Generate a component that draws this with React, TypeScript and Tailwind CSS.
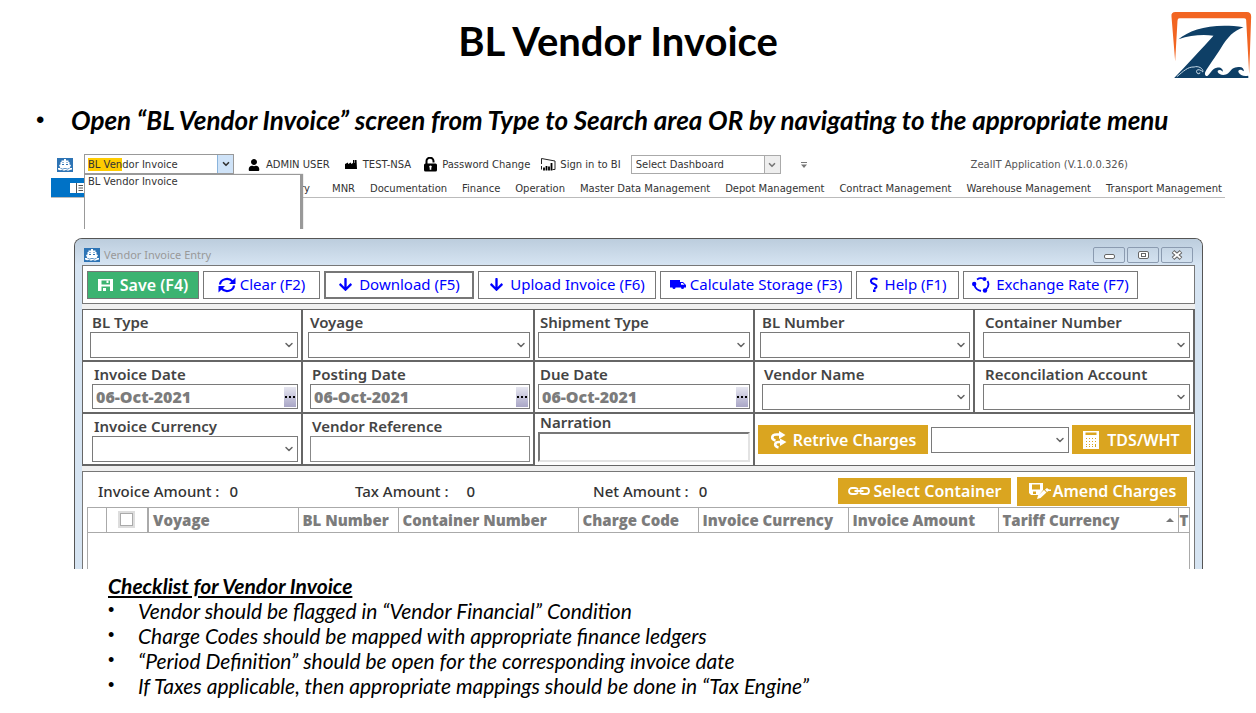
import { useState } from "react"
import type { ReactNode } from "react"
import clsx from "clsx"
import { ChevronDown } from "lucide-react"
import { FaArrowDown, FaUser } from "react-icons/fa"

const menus = [
  "MNR",
  "Documentation",
  "Finance",
  "Operation",
  "Master Data Management",
  "Depot Management",
  "Contract Management",
  "Warehouse Management",
  "Transport Management",
]

const checklist = [
  "Vendor should be flagged in “Vendor Financial” Condition",
  "Charge Codes should be mapped with appropriate finance ledgers",
  "“Period Definition” should be open for the corresponding invoice date",
  "If Taxes applicable, then appropriate mappings should be done in “Tax Engine”",
]

const columns = [
  { label: "Voyage", width: "w-[150px]" },
  { label: "BL Number", width: "w-[100px]" },
  { label: "Container Number", width: "w-[180px]" },
  { label: "Charge Code", width: "w-[120px]" },
  { label: "Invoice Currency", width: "w-[150px]" },
  { label: "Invoice Amount", width: "w-[150px]" },
  { label: "Tariff Currency", width: "w-[180px]", sorted: true },
  { label: "T", width: "w-auto" },
]

function Logo() {
  return (
    <svg viewBox="60 33 245 204" className="h-[68px] w-[82px]" role="img" aria-label="Company logo">
      <path
        d="M75 184 L64 50 Q62 36 76 36 H290 Q303 36 303 50 L297 222 L288 60 Q288 55 282 55 H88 Q82 55 82 62 Z"
        fill="#f26522"
      />
      <path
        d="M85 118 C120 88 190 68 280 82 C250 92 232 112 212 145 C194 174 176 196 165 217 C162 228 168 230 180 228 H294 V234 H72 C110 195 155 145 190 107 C155 103 120 106 85 118 Z"
        fill="#0e3f66"
      />
      <path
        d="M80 230 C100 214 112 200 132 201 C143 197 160 204 158 216 C151 207 138 207 139 215 C140 223 151 223 149 217"
        fill="none"
        stroke="#c9dbe8"
        strokeWidth="3"
      />
      <path
        d="M166 232 C180 224 184 206 200 203 C210 200 219 206 218 215 C211 207 200 209 203 217 C206 225 224 228 234 220 C243 212 246 203 260 202 C274 198 282 205 281 214 C273 206 262 208 265 217 C269 226 282 230 294 227 V234 Z"
        fill="#0e3f66"
      />
    </svg>
  )
}

function ShipIcon() {
  return (
    <svg viewBox="0 0 16 14" className="h-3.5 w-4 shrink-0" aria-hidden="true">
      <rect width="16" height="14" fill="#2e74b5" />
      <path
        d="M7 1h2v1.500h2.500V4h1v2.500L14 7l-1.300 3H15v1.500l-2 .5-2 .8-2-.8-2 .8-2-.8-2 .3-2-.8V10h2.300L2 7l1.500-.5V4h1V2.500H7Z"
        fill="#fff"
      />
      <path
        d="M5.500 4h1v1h-1zM9.500 4h1v1h-1zM5 6h2v1H5zM9 6h2v1H9zM3.500 10l2 .8L8 10l2.500.8 2-.8v.8l-2 .8L8 10.800l-2.500.8-2-.8Z"
        fill="#2e74b5"
      />
    </svg>
  )
}

function FactoryIcon() {
  return (
    <svg viewBox="0 0 12 9" className="h-[9px] w-3" aria-hidden="true">
      <path d="M0 9V4l3-1.500V4l3-1.500V4l2-1V0h1.500v3H10V0h1.500L12 9Z" fill="#000" />
    </svg>
  )
}

function UnlockIcon() {
  return (
    <svg viewBox="0 0 15 15" className="size-[15px]" aria-hidden="true">
      <path d="M3.500 7V4.500a3.500 3.500 0 0 1 7-.5v1.500" fill="none" stroke="#000" strokeWidth="2" />
      <rect x="1" y="6.500" width="13" height="8" rx="1.500" fill="#000" />
      <path d="M7.500 8.500a1.300 1.300 0 0 1 .8 2.300v2H6.700v-2a1.300 1.300 0 0 1 .8-2.300" fill="#fff" />
    </svg>
  )
}

function BiIcon() {
  return (
    <svg viewBox="0 0 16 15" className="h-[15px] w-4" fill="none" aria-hidden="true">
      <path d="M1.500 7V1.500L15 4v8.500h-2.500M1.500 9v3.500" stroke="#222" />
      <path d="M4 10.500v3M6.500 9v4.500M9 9.500v4M11.500 6v7.500" stroke="#000" strokeWidth="1.800" />
    </svg>
  )
}

function SaveIcon() {
  return (
    <svg viewBox="0 0 15 13" className="h-[13px] w-[15px]" aria-hidden="true">
      <path d="M0 1h15v12h-3V8.500H3.500V13H0ZM3.500 2.500v4H12v-4Z" fill="#fff" fillRule="evenodd" />
      <path d="M8.500 2.500h2V5h-2ZM5 10h3v3H5Z" fill="#fff" />
    </svg>
  )
}

function RefreshIcon() {
  return (
    <svg viewBox="0 0 18 16" className="h-4 w-[18px]" aria-hidden="true">
      <path
        d="M2 7.500C2.500 2 10.500 0 14.500 4.500M16 8.500C15.500 14 7.500 16 3.500 11.500"
        fill="none"
        stroke="#00f"
        strokeWidth="2.200"
      />
      <path d="M17.500 0.500V7H11ZM.5 15.500V9H7Z" fill="#00f" />
    </svg>
  )
}

function TruckIcon() {
  return (
    <svg viewBox="0 0 16 9" className="h-[9px] w-4" aria-hidden="true">
      <path d="M0 0h10v2h3l3 3v2.500H0Z" fill="#00f" />
      <path d="M11 3h1.800l1.700 1.700H11Z" fill="#fff" />
      <circle cx="4" cy="7.500" r="1.500" fill="#00f" />
      <circle cx="12.500" cy="7.500" r="1.500" fill="#00f" />
    </svg>
  )
}

function HelpIcon() {
  return (
    <svg viewBox="0 0 10 15" className="h-[15px] w-2.5" aria-hidden="true">
      <path
        d="M8.500 2.500C5 .5 1.500 2 2 4.500c.5 3 5 2 5.500 4.500.2 1.500-1 2.500-2.500 2.500"
        fill="none"
        stroke="#00f"
        strokeWidth="2"
      />
      <rect x="4" y="12.500" width="2.500" height="2.500" fill="#00f" />
    </svg>
  )
}

function ExchangeIcon() {
  return (
    <svg viewBox="0 0 18 16" className="h-4 w-[18px]" aria-hidden="true">
      <path
        d="M5 2.500Q8 .5 11 1.500M15.500 4Q18 8.500 14 12.500M9 14Q4 13 2.500 8.500"
        fill="none"
        stroke="#00f"
        strokeWidth="1.800"
      />
      <circle cx="12.500" cy="2" r="2" fill="#00f" />
      <circle cx="2.200" cy="7" r="2.200" fill="#00f" />
      <circle cx="13" cy="13.500" r="2.200" fill="#00f" />
    </svg>
  )
}

function RetrieveIcon() {
  return (
    <svg viewBox="0 0 17 18" className="h-[18px] w-[17px]" aria-hidden="true">
      <path
        d="M11 3.500H6.500C1 3.500 1 8.500 5.500 9.500M12 11H9C4 11 4 15.500 8.500 16.500"
        fill="none"
        stroke="#fff"
        strokeWidth="2.600"
      />
      <path d="M9 0 15.500 4 9 8ZM10 7.500l6.500 3.500-6.500 4Z" fill="#fff" />
    </svg>
  )
}

function CalculatorIcon() {
  return (
    <svg viewBox="0 0 16 18" className="h-[18px] w-4" aria-hidden="true">
      <path d="M0 0h16v18H0Z" fill="#fff" />
      <path
        d="M2.500 1.500h11V4h-11ZM3 7h1v1H3zM6 7h1v1H6zM9 7h1v1H9zM12 7h1v1h-1zM3 10h1v1H3zM6 10h1v1H6zM9 10h1v1H9zM12 10h1v1h-1zM3 13h1v1H3zM6 13h1v1H6zM9 13h1v1H9zM12 13h1v3h-1zM3 15h1v1H3zM6 15h1v1H6zM9 15h1v1H9z"
        fill="#daa520"
      />
    </svg>
  )
}

function LinkIcon() {
  return (
    <svg viewBox="0 0 22 8" className="h-2 w-[22px]" fill="none" stroke="#fff" strokeWidth="1.800" aria-hidden="true">
      <path d="M10 2.500Q9 1 7 1H4a3 3 0 0 0 0 6h3q2 0 3-1.500M12 2.500Q13 1 15 1h3a3 3 0 0 1 0 6h-3q-2 0-3-1.500M6.500 4h9" />
    </svg>
  )
}

function AmendIcon() {
  return (
    <svg viewBox="0 0 23 16" className="h-4 w-[23px]" aria-hidden="true">
      <path d="M1 0h14v7l-4 5H3l-2-2ZM4 1.500v5h8v-5ZM5 8.500v2.500h3V8.500Z" fill="#fff" fillRule="evenodd" />
      <path d="M9 16 10 12.500l6-5.500 2.500 2.500-6 5.500ZM17 6.500 19 5l2 1.500h2v1.500h-2.500L19 9Z" fill="#fff" />
    </svg>
  )
}

function ToolButton({ icon, children, className }: { icon: ReactNode; children: ReactNode; className: string }) {
  return (
    <button
      type="button"
      className={clsx("flex h-7 items-center justify-center whitespace-nowrap border", className)}
    >
      {icon}
      {children}
    </button>
  )
}

function GoldButton({ icon, children, className }: { icon: ReactNode; children: ReactNode; className: string }) {
  return (
    <button
      type="button"
      className={clsx(
        "flex shrink-0 items-center justify-center whitespace-nowrap bg-[#daa520] text-[16px] font-semibold text-white",
        className
      )}
    >
      {icon}
      {children}
    </button>
  )
}

function SelectBox({ id, label }: { id: string; label?: string }) {
  return (
    <div className="grid h-[26px] w-full items-center border border-[#7a7a7a] bg-white">
      <select id={id} aria-label={label} className="col-start-1 row-start-1 h-full w-full appearance-none px-1 text-sm" />
      <ChevronDown
        size={12}
        strokeWidth={3}
        className="pointer-events-none col-start-1 row-start-1 mr-0.5 justify-self-end text-[#666]"
      />
    </div>
  )
}

function DateBox({ id }: { id: string }) {
  const [date, setDate] = useState("06-Oct-2021")
  return (
    <div className="flex h-[25px] items-center border border-[#7a7a7a]">
      <input
        id={id}
        value={date}
        onChange={(e) => setDate(e.target.value)}
        className="h-full w-0 flex-1 px-[3px] font-['Open_Sans',sans-serif] text-[16px] font-extrabold text-[#7c7c7c]"
      />
      <button
        type="button"
        aria-label="Pick date"
        className="mr-px flex h-5 w-3 items-center justify-between bg-gradient-to-b from-[#e6e6f0] to-[#a9a6c6] px-px"
      >
        <span className="size-0.5 bg-black" />
        <span className="size-0.5 bg-black" />
        <span className="size-0.5 bg-black" />
      </button>
    </div>
  )
}

function Field({
  id,
  label,
  className,
  children,
}: {
  id: string
  label: string
  className?: string
  children: ReactNode
}) {
  return (
    <div className={clsx("border-r-2 border-b-2 border-[#666] pr-[3px] pt-1", className)}>
      <label htmlFor={id} className="block h-[18px] pl-0.5 text-[15px] leading-[17px] font-semibold text-[#444]">
        {label}
      </label>
      {children}
    </div>
  )
}

function AppStrip() {
  const [query, setQuery] = useState("BL Vendor Invoice")
  return (
    <div className="ml-[51px] mr-[31px] h-[76px] overflow-hidden font-['DejaVu_Sans',sans-serif] text-[10px] text-[#333]">
      <div className="flex h-[23px] items-center">
        <div className="ml-1.5 mr-[11px]">
          <ShipIcon />
        </div>
        <div className="relative mt-px mr-3.5 flex h-5 w-[150px] shrink-0 self-start border border-[#999]">
          <input
            aria-label="Type to search"
            value={query}
            onChange={(e) => setQuery(e.target.value)}
            className="w-0 flex-1 bg-[linear-gradient(#ffcc00,#ffcc00)] bg-[length:34px_13px] bg-[position:3px_3px] bg-no-repeat pl-[3px]"
          />
          <button
            type="button"
            aria-label="Show results"
            className="flex w-4 items-center justify-center border-l border-[#8ab4dc] bg-[#cfe3f8]"
          >
            <ChevronDown size={10} strokeWidth={4} />
          </button>
          <ul className="absolute -left-px top-[19px] z-10 h-20 w-[217px] border-x border-t border-[#999] bg-white pl-[3px] shadow-[2px_0_1px_#999]">
            <li className="leading-[14px]">BL Vendor Invoice</li>
          </ul>
        </div>
        <button type="button" className="mr-[15px] flex items-center gap-1.5 whitespace-nowrap">
          <FaUser size={12} color="#000" />
          ADMIN USER
        </button>
        <button type="button" className="mr-3 flex items-center gap-1.5 whitespace-nowrap">
          <FactoryIcon />
          TEST-NSA
        </button>
        <button type="button" className="mr-2.5 flex items-center gap-1 whitespace-nowrap">
          <UnlockIcon />
          Password Change
        </button>
        <button type="button" className="mr-2.5 flex items-center gap-1 whitespace-nowrap">
          <BiIcon />
          Sign in to BI
        </button>
        <div className="grid h-[19px] w-[150px] shrink-0 border border-[#aaa]">
          <select aria-label="Dashboard" className="col-start-1 row-start-1 appearance-none pl-1">
            <option>Select Dashboard</option>
          </select>
          <span className="pointer-events-none col-start-1 row-start-1 flex w-4 items-center justify-center justify-self-end border-l border-[#aaa] bg-[#eee]">
            <ChevronDown size={10} strokeWidth={4} className="text-[#777]" />
          </span>
        </div>
        <svg viewBox="0 0 6 6" className="ml-5 size-1.5" aria-hidden="true">
          <path d="M0 0h6v1H0zM0 2.500h6L3 6Z" fill="#777" />
        </svg>
        <span className="ml-auto mr-[97px] whitespace-nowrap text-[#555]">ZealIT Application (V.1.0.0.326)</span>
      </div>
      <nav className="mt-0.5 flex h-5 items-center border-b border-[#bbb]">
        <div className="flex h-full w-[33px] shrink-0 items-center justify-end bg-[#0072c6]">
          <svg viewBox="0 0 14 10" className="h-2.5 w-3.5" aria-hidden="true">
            <path d="M0 0h14v10H0Z" fill="#fff" />
            <path d="M6.500 0v10M8.500 2.500H13M8.500 5H13M8.500 7.500H13" stroke="#555" />
          </svg>
        </div>
        <a href="#" className="w-[226px] shrink-0 pt-0.5 text-right">
          Inventory
        </a>
        <div className="flex flex-1 justify-between whitespace-nowrap pt-0.5 pl-[22px] pr-[3px]">
          {menus.map((menu) => (
            <a key={menu} href="#">
              {menu}
            </a>
          ))}
        </div>
      </nav>
    </div>
  )
}

function InvoiceWindow() {
  return (
    <section className="mt-[9px] mr-[53px] ml-[74px] h-[331px] overflow-hidden rounded-t-lg border border-b-0 border-[#555] bg-[#d6e4f2] px-[7px] font-['Noto_Sans',sans-serif]">
      <div className="-mx-[7px] flex h-[26px] items-center bg-gradient-to-b from-[#bccddd] to-[#d6e4f2] px-[9px] pt-1.5">
        <ShipIcon />
        <h2 className="ml-1 text-[11px] text-[#999]">Vendor Invoice Entry</h2>
        <div className="ml-auto flex gap-0.5">
          <button
            type="button"
            aria-label="Minimize"
            className="flex h-4 w-8 items-center justify-center rounded-xs border border-[#8b9bb0]"
          >
            <span className="mt-0.5 h-[5px] w-[11px] rounded-xs border border-[#666] bg-white" />
          </button>
          <button
            type="button"
            aria-label="Maximize"
            className="flex h-4 w-8 items-center justify-center rounded-xs border border-[#8b9bb0]"
          >
            <span className="flex h-2 w-[11px] items-center justify-center rounded-xs border border-[#666] bg-white">
              <span className="h-1 w-[5px] border border-[#666]" />
            </span>
          </button>
          <button
            type="button"
            aria-label="Close"
            className="flex h-4 w-8 items-center justify-center rounded-xs border border-[#8b9bb0]"
          >
            <svg viewBox="0 0 12 10" className="h-2.5 w-3" fill="none" aria-hidden="true">
              <path d="M2 1.500 10 8.500M10 1.500 2 8.500" stroke="#666" strokeWidth="4" />
              <path d="M2.500 2 9.500 8M9.500 2 2.500 8" stroke="#fff" strokeWidth="1.800" />
            </svg>
          </button>
        </div>
      </div>

      <div className="bg-[#f0f0f0]">
        <div className="flex h-[39px] items-center gap-1 border border-[#777] bg-white px-1 text-[15px] text-[#0000ff]">
          <ToolButton
            icon={<SaveIcon />}
            className="w-28 gap-[7px] border-[#777] bg-[#3cb371] text-[16px] font-semibold text-white"
          >
            Save (F4)
          </ToolButton>
          <ToolButton icon={<RefreshIcon />} className="w-[117px] gap-1 border-[#777]">
            Clear (F2)
          </ToolButton>
          <ToolButton icon={<FaArrowDown size={15} />} className="w-[150px] gap-1.5 border-2 border-[#777]">
            Download (F5)
          </ToolButton>
          <ToolButton icon={<FaArrowDown size={15} />} className="w-[178px] gap-1.5 border-[#777]">
            Upload Invoice (F6)
          </ToolButton>
          <ToolButton icon={<TruckIcon />} className="w-48 gap-1 border-[#777]">
            Calculate Storage (F3)
          </ToolButton>
          <ToolButton icon={<HelpIcon />} className="w-[103px] gap-1.5 border-[#777]">
            Help (F1)
          </ToolButton>
          <ToolButton icon={<ExchangeIcon />} className="w-[175px] gap-1.5 border-[#777]">
            Exchange Rate (F7)
          </ToolButton>
        </div>

        <form className="mt-[5px] grid grid-cols-[220fr_232fr_220fr_220fr_220fr] border border-r-0 border-b-0 border-[#666] bg-white">
          <Field id="bl-type" label="BL Type" className="h-[52px] pl-[7px]">
            <SelectBox id="bl-type" />
          </Field>
          <Field id="voyage" label="Voyage" className="pl-[5px]">
            <SelectBox id="voyage" />
          </Field>
          <Field id="shipment-type" label="Shipment Type" className="pl-[3px]">
            <SelectBox id="shipment-type" />
          </Field>
          <Field id="bl-number" label="BL Number" className="pl-[5px]">
            <SelectBox id="bl-number" />
          </Field>
          <Field id="container-number" label="Container Number" className="border-r pl-2">
            <SelectBox id="container-number" />
          </Field>

          <Field id="invoice-date" label="Invoice Date" className="h-[52px] pl-[9px]">
            <DateBox id="invoice-date" />
          </Field>
          <Field id="posting-date" label="Posting Date" className="pl-[7px]">
            <DateBox id="posting-date" />
          </Field>
          <Field id="due-date" label="Due Date" className="pl-[3px]">
            <DateBox id="due-date" />
          </Field>
          <Field id="vendor-name" label="Vendor Name" className="pl-[7px]">
            <SelectBox id="vendor-name" />
          </Field>
          <Field id="reconcilation-account" label="Reconcilation Account" className="border-r pl-2">
            <SelectBox id="reconcilation-account" />
          </Field>

          <Field id="invoice-currency" label="Invoice Currency" className="h-[52px] border-b pl-[9px]">
            <SelectBox id="invoice-currency" />
          </Field>
          <Field id="vendor-reference" label="Vendor Reference" className="border-b pl-[7px]">
            <input id="vendor-reference" className="block h-[26px] w-full border border-[#888] px-1 text-sm" />
          </Field>
          <div className="border-r-2 border-b border-[#666] px-[3px]">
            <label
              htmlFor="narration"
              className="block h-[18px] pl-0.5 text-[15px] leading-[17px] font-semibold text-[#444]"
            >
              Narration
            </label>
            <textarea
              id="narration"
              className="block h-[30px] w-full resize-none border-2 border-[#e3e3e3] border-t-[#777] border-l-[#777]"
            />
          </div>
          <div className="col-span-2 flex items-center gap-[3px] border-r border-b border-[#666] px-[3px]">
            <GoldButton icon={<RetrieveIcon />} className="h-[29px] w-[170px] gap-1.5">
              Retrive Charges
            </GoldButton>
            <SelectBox id="tax-type" label="Tax type" />
            <GoldButton icon={<CalculatorIcon />} className="h-[29px] w-[119px] gap-2">
              TDS/WHT
            </GoldButton>
          </div>
        </form>

        <div className="mt-[5px] h-[110px] border border-[#777] bg-white px-1 pt-[3px]">
          <div className="flex h-8 items-center text-[15px] font-medium text-[#333]">
            <div className="flex w-[257px] gap-2.5 pl-[11px]">
              <span>Invoice Amount :</span>
              <span>0</span>
            </div>
            <div className="flex w-[238px] gap-[18px] pl-[11px]">
              <span>Tax Amount :</span>
              <span>0</span>
            </div>
            <div className="flex gap-2.5 pl-[11px]">
              <span>Net Amount :</span>
              <span>0</span>
            </div>
            <GoldButton icon={<LinkIcon />} className="ml-auto h-[26px] w-[173px] gap-1">
              Select Container
            </GoldButton>
            <GoldButton icon={<AmendIcon />} className="mr-[3px] ml-1.5 h-[29px] w-[170px] gap-0.5">
              Amend Charges
            </GoldButton>
          </div>
          <div className="h-[80px] overflow-hidden border border-[#aaa]">
            <table className="w-full table-fixed border-collapse text-left font-['Open_Sans',sans-serif] text-[15px] text-[#7c7c7c]">
              <thead>
                <tr className="h-6 border-b border-[#aaa]">
                  <th className="w-[18px] border-r border-[#aaa]" aria-label="Row" />
                  <th className="w-[42px] border-r-2 border-[#aaa] p-0">
                    <input
                      type="checkbox"
                      aria-label="Select all rows"
                      className="mx-auto block size-[13px] appearance-none border border-[#aaa] bg-white outline-2 outline-[#ddd]"
                    />
                  </th>
                  {columns.map((col) => (
                    <th
                      key={col.label}
                      className={clsx(
                        "overflow-hidden whitespace-nowrap border-r border-[#aaa] p-0 pl-1 font-extrabold leading-5 last:border-r-0 last:pl-px",
                        col.width
                      )}
                    >
                      <span className="flex items-center justify-between">
                        {col.label}
                        {col.sorted && (
                          <svg viewBox="0 0 8 4" className="mr-1 h-1 w-2" aria-hidden="true">
                            <path d="M4 0 8 4H0Z" fill="#777" />
                          </svg>
                        )}
                      </span>
                    </th>
                  ))}
                </tr>
              </thead>
            </table>
          </div>
        </div>
      </div>
    </section>
  )
}

export default function App() {
  return (
    <main className="bg-white font-['Lato',sans-serif] text-black">
      <header className="flex h-[90px] items-start pl-[66px] pr-1">
        <h1 className="flex-1 pt-[15px] text-center text-[40px] leading-[52px] font-bold">BL Vendor Invoice</h1>
        <div className="pt-[11px]">
          <Logo />
        </div>
      </header>
      <ul className="h-[63px] pt-[14px] pl-9">
        <li className="flex gap-[27px] whitespace-nowrap text-[26px] leading-8">
          <span className="w-2 font-['Liberation_Sans',sans-serif] text-[24px]" aria-hidden="true">
            •
          </span>
          <span className="font-bold italic">
            Open “BL Vendor Invoice” screen from Type to Search area OR by navigating to the appropriate menu
          </span>
        </li>
      </ul>
      <AppStrip />
      <InvoiceWindow />
      <section className="pt-1 pl-[108px] text-[21px] leading-[25px] italic">
        <h2 className="font-bold underline">Checklist for Vendor Invoice</h2>
        <ul>
          {checklist.map((item) => (
            <li key={item} className="flex gap-[22px]">
              <span className="w-2 font-['Liberation_Sans',sans-serif] text-[18px] not-italic" aria-hidden="true">
                •
              </span>
              {item}
            </li>
          ))}
        </ul>
      </section>
    </main>
  )
}
